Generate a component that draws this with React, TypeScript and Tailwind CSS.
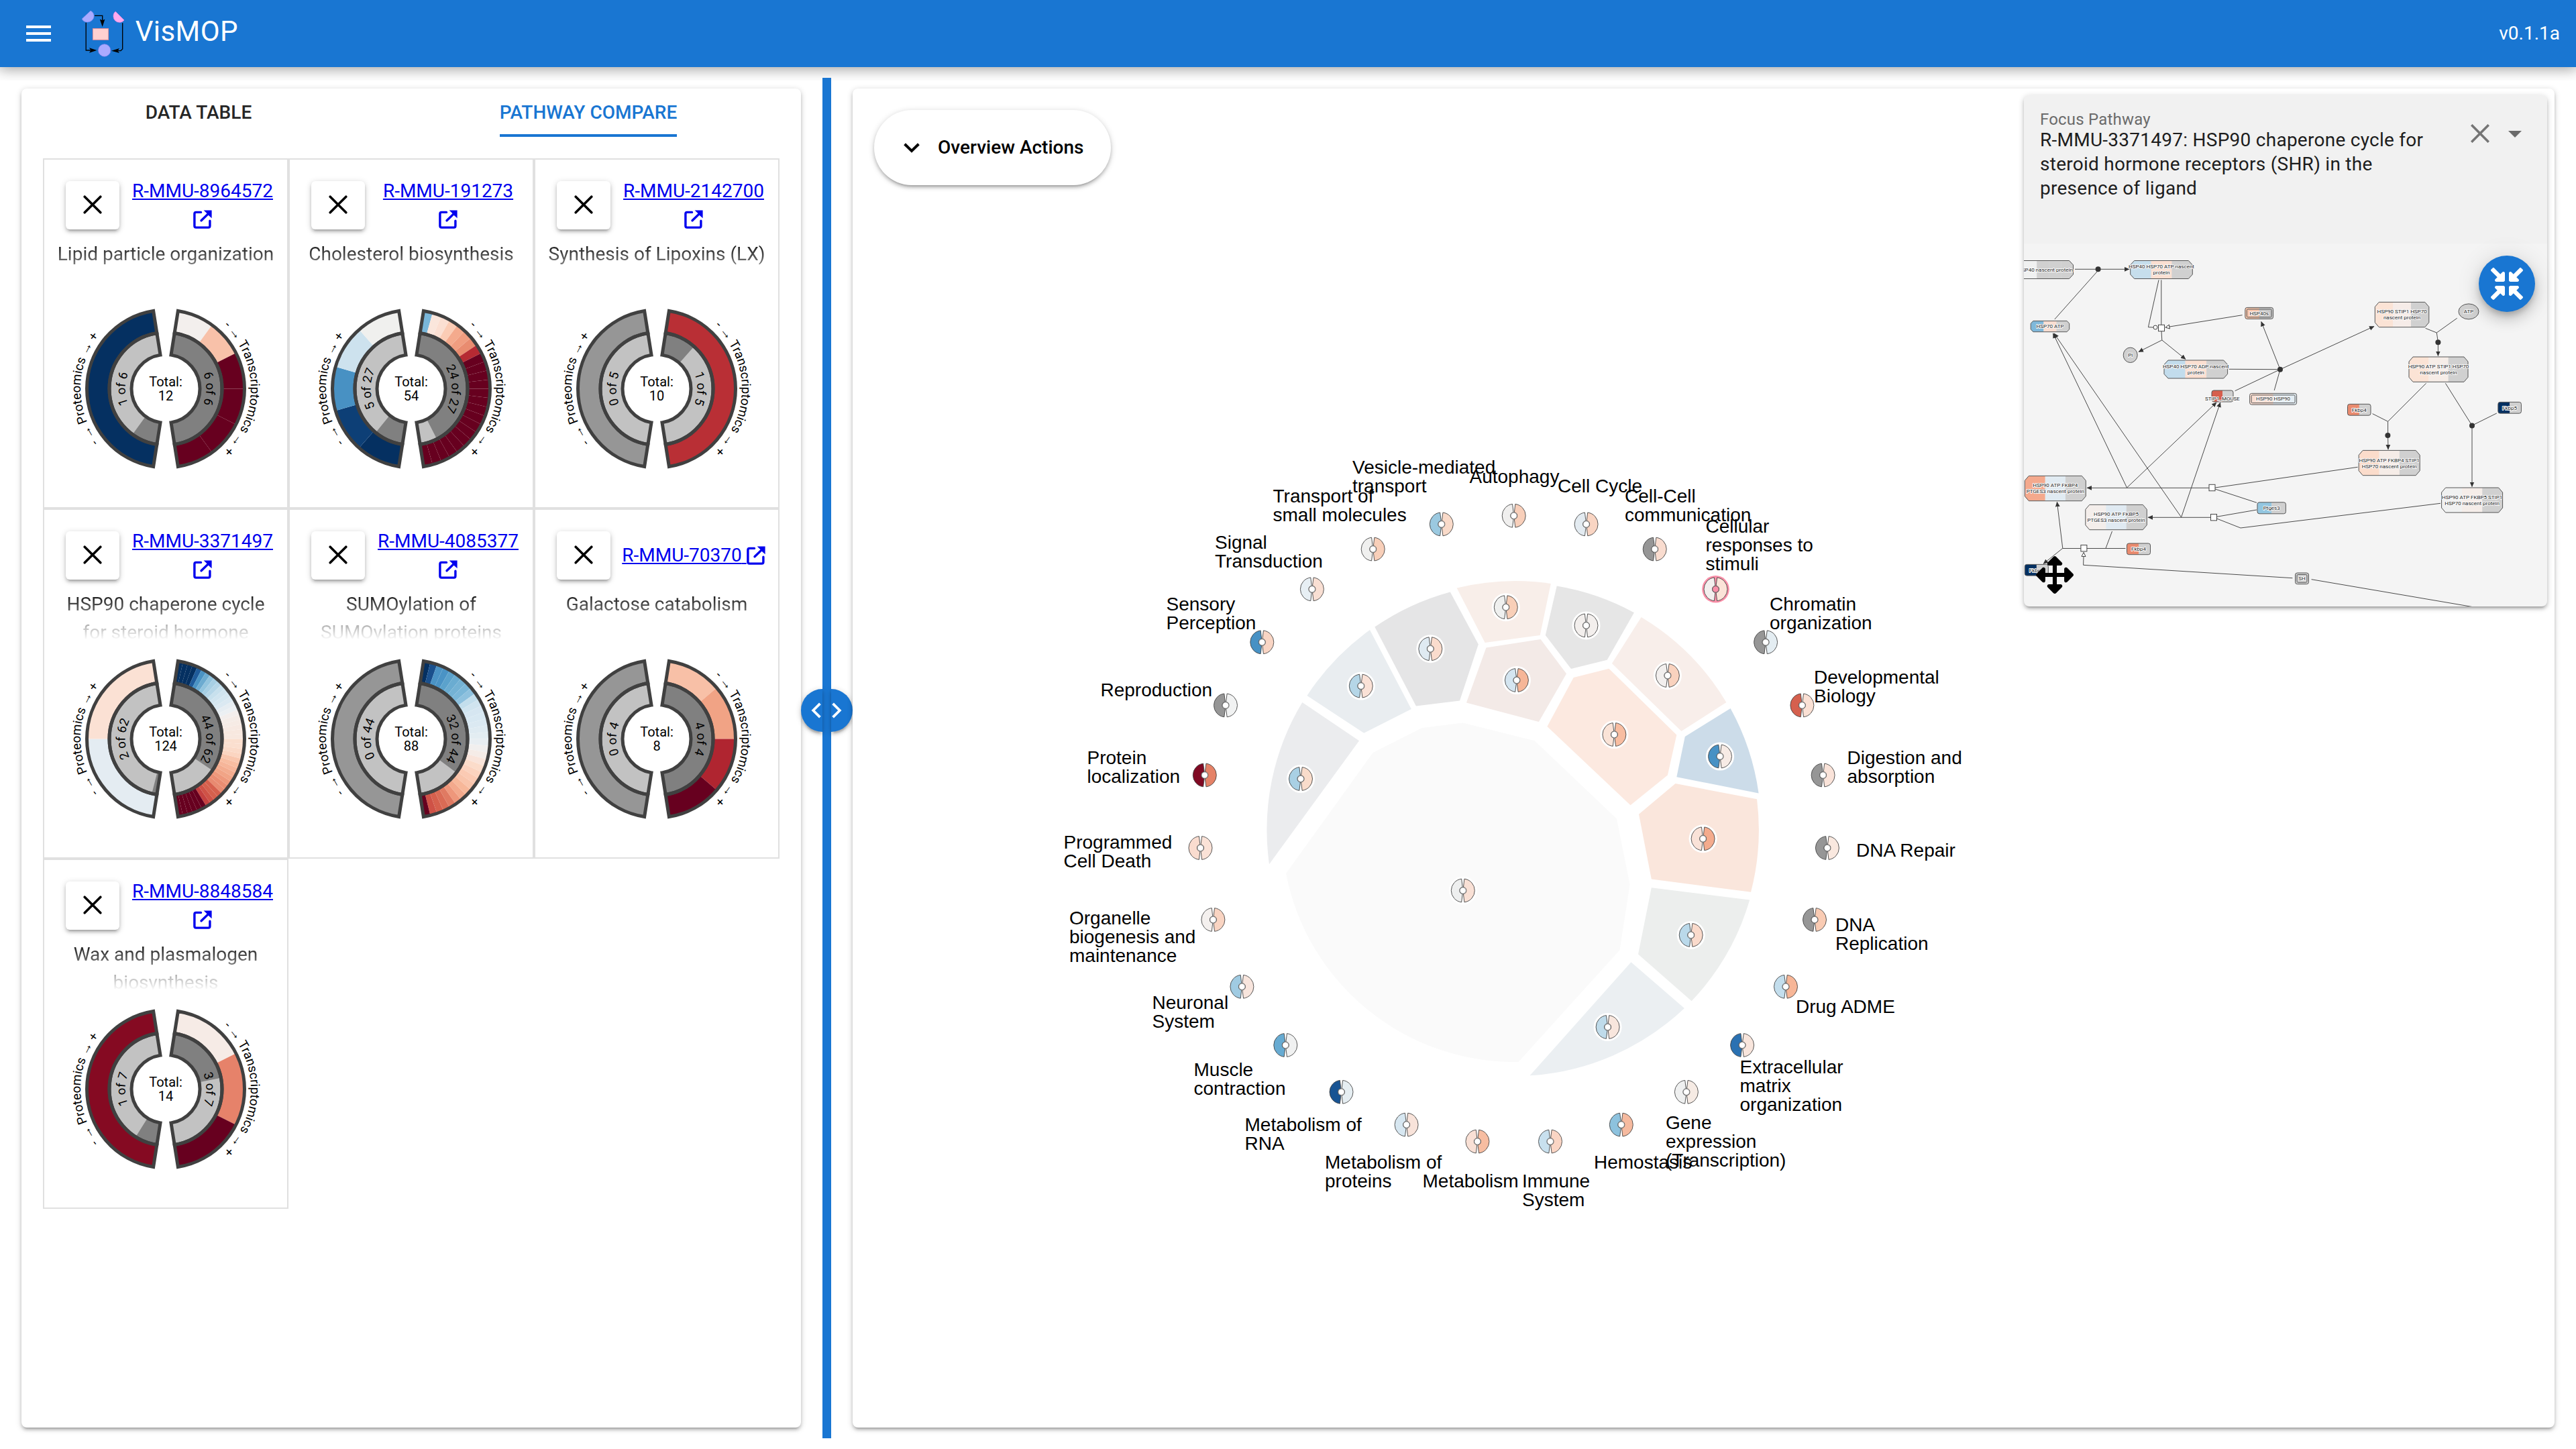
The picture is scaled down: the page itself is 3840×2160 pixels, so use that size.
import React from "react";
import { FaArrowsAlt, FaCompressArrowsAlt } from "react-icons/fa";

/* ---------- geometry helpers ---------- */

const rad = (deg: number) => (deg * Math.PI) / 180;

/* Angles are measured clockwise from twelve o'clock. */
const pt = (r: number, deg: number) =>
  `${(r * Math.sin(rad(deg))).toFixed(3)} ${(-r * Math.cos(rad(deg))).toFixed(3)}`;

const sector = (r0: number, r1: number, a0: number, a1: number) => {
  const big = a1 - a0 > 180 ? 1 : 0;
  return `M${pt(r1, a0)}A${r1} ${r1} 0 ${big} 1 ${pt(r1, a1)}L${pt(r0, a1)}A${r0} ${r0} 0 ${big} 0 ${pt(r0, a0)}Z`;
};

const rep = (color: string, n: number): string[] => Array(n).fill(color);

/* ---------- pathway compare ---------- */

type Omics = { hit: number; colors: string[] };
type Pathway = {
  id: string;
  name: string;
  size: number;
  prot: Omics;
  trans: Omics;
};

const NAVY = "#053061";
const WINE = "#67001f";

const pathways: Pathway[] = [
  {
    id: "R-MMU-8964572",
    name: "Lipid particle organization",
    size: 6,
    prot: { hit: 1, colors: [NAVY] },
    trans: { hit: 6, colors: ["#f3efed", "#f8c1a9", ...rep(WINE, 4)] },
  },
  {
    id: "R-MMU-191273",
    name: "Cholesterol biosynthesis",
    size: 27,
    prot: { hit: 5, colors: [NAVY, "#0d3f76", "#4891c3", "#cde2ee", "#f0f0ee"] },
    trans: {
      hit: 24,
      colors: ["#79b6d9", "#fae6dc", "#fbdfd2", "#fbccb5", "#f4aa8d", "#f09d80", "#e98c70", "#b62a33", ...rep(WINE, 16)],
    },
  },
  {
    id: "R-MMU-2142700",
    name: "Synthesis of Lipoxins (LX)",
    size: 5,
    prot: { hit: 0, colors: [] },
    trans: { hit: 1, colors: ["#b92f35"] },
  },
  {
    id: "R-MMU-3371497",
    name: "HSP90 chaperone cycle for steroid hormone receptors (SHR) in the presence of ligand",
    size: 62,
    prot: { hit: 2, colors: ["#e4ecf2", "#fbe1d4"] },
    trans: {
      hit: 44,
      colors: [
        ...rep(NAVY, 4), "#1f5b9a", "#4a93c4", "#6cabd0", "#92c4de", "#a7cfe4", "#b5d6e8", "#c7e0ed",
        "#d0e4ef", "#d5e7f1", "#dbe9f2", "#e6edf2", "#ecf0f3", "#f3eeec", "#f5ece7", "#f6ebe5", "#f7e9e2",
        "#f8e8df", "#f8e8df", "#fbdfcf", "#fbdfcf", "#fbdac8", "#fbd5c1", "#f9c6ad", "#f8bda1", "#f6b599",
        "#f3ac8f", "#f1a486", "#ee987b", "#ea8d72", "#e88a70", "#d6604d", "#d6604d", "#cf5246", "#c5413f",
        ...rep(WINE, 6),
      ],
    },
  },
  {
    id: "R-MMU-4085377",
    name: "SUMOylation of SUMOylation proteins",
    size: 44,
    prot: { hit: 0, colors: [] },
    trans: {
      hit: 32,
      colors: [
        NAVY, "#1a508d", "#4a93c5", "#4a93c5", "#5ba2cc", "#6aacd1", "#74b2d4", "#7bb7d8", "#8ec1de",
        "#c3deec", "#d0e4ef", "#d6e6f1", "#d8e8f2", "#dbe9f2", "#dfebf2", "#e3edf2", "#e8eef2", "#f1efee",
        "#f5ece7", "#f9e4da", "#fbdcca", "#fbd3bf", "#fbcab3", "#f9c4ab", "#f7b799", "#f3a98c", "#ee977b",
        "#e07a62", "#da6b55", "#d6604d", "#cf5246", WINE,
      ],
    },
  },
  {
    id: "R-MMU-70370",
    name: "Galactose catabolism",
    size: 4,
    prot: { hit: 0, colors: [] },
    trans: { hit: 4, colors: ["#f8c0a7", "#f1a385", "#b02530", WINE] },
  },
  {
    id: "R-MMU-8848584",
    name: "Wax and plasmalogen biosynthesis",
    size: 7,
    prot: { hit: 1, colors: ["#850a22"] },
    trans: { hit: 3, colors: ["#f6ebe6", "#e6826a", WINE] },
  },
];

function Half({ start, omics, size }: { start: number; omics: Omics; size: number }) {
  const span = 162;
  const colors = omics.colors.length ? omics.colors : ["#969696"];
  const step = span / colors.length;
  const split = start + (span * omics.hit) / size;
  const end = start + span;
  return (
    <g>
      {colors.map((c, i) => (
        <path key={i} d={sector(84, 117.5, start + i * step, start + (i + 1) * step)} fill={c} />
      ))}
      <path d={sector(51, 84, start, end)} fill="#c2c2c2" />
      {omics.hit > 0 && <path d={sector(51, 84, start, split)} fill="#808080" />}
      <path d={sector(84, 117.5, start, end)} fill="none" stroke="#404040" strokeWidth={5} />
      <path d={sector(51, 84, start, end)} fill="none" stroke="#404040" strokeWidth={5} />
    </g>
  );
}

function Donut({ p }: { p: Pathway }) {
  const k = p.id;
  return (
    <svg className="block h-[295px] w-[362px] overflow-visible font-['Roboto',sans-serif]" viewBox="-181 -147.5 362 295">
      <defs>
        <path id={`${k}-lo`} d="M0 127A127 127 0 0 1 0 -127" />
        <path id={`${k}-ro`} d="M0 -127A127 127 0 0 1 0 127" />
        <path id={`${k}-li`} d="M0 60.5A60.5 60.5 0 0 1 0 -60.5" />
        <path id={`${k}-ri`} d="M0 -60.5A60.5 60.5 0 0 1 0 60.5" />
      </defs>
      <Half start={189} omics={p.prot} size={p.size} />
      <Half start={9} omics={p.trans} size={p.size} />
      <g fontSize={19} textAnchor="middle" fill="#000">
        <text><textPath href={`#${k}-lo`} startOffset="50%">{"- → Proteomics → +"}</textPath></text>
        <text><textPath href={`#${k}-ro`} startOffset="50%">{"- → Transcriptomics → +"}</textPath></text>
      </g>
      <g fontSize={18.5} textAnchor="middle" fill="#000">
        <text><textPath href={`#${k}-li`} startOffset="50%">{`${p.prot.hit} of ${p.size}`}</textPath></text>
        <text><textPath href={`#${k}-ri`} startOffset="50%">{`${p.trans.hit} of ${p.size}`}</textPath></text>
      </g>
      <g fontSize={20} textAnchor="middle" fill="#000">
        <text y={-3.5}>Total:</text>
        <text y={17.5}>{p.size * 2}</text>
      </g>
    </svg>
  );
}

function ExternalIcon() {
  return (
    <svg viewBox="0 0 28 28" className="inline-block h-7 w-7 align-[-5px]" fill="none" stroke="#0000ee" strokeWidth={3.4}>
      <path d="M11.5 3.4H4.2Q1.9 3.4 1.9 5.7V23.8Q1.9 26.1 4.2 26.1H22.6Q24.9 26.1 24.9 23.8V16.2" strokeLinecap="round" />
      <path d="M12 15.8L23.5 4.6" strokeLinecap="round" />
      <path d="M15.6 0.4H27.6V12.2L23.4 8.4L19.6 4.2Z" fill="#0000ee" stroke="none" />
    </svg>
  );
}

function CompareCell({ p }: { p: Pathway }) {
  return (
    <div className="h-[522px] w-[366px] border-2 border-[#e0e0e0] pt-8">
      <div className="flex h-[72px] items-center pl-8">
        <button className="flex h-[72px] w-20 shrink-0 items-center justify-center rounded-[6px] bg-white pb-[2px] shadow-[0_2px_10px_rgba(0,0,0,0.2),0_4px_4px_rgba(0,0,0,0.14),0_6px_2px_-4px_rgba(0,0,0,0.12)]">
          <svg viewBox="0 0 28 28" className="h-7 w-7" stroke="#000" strokeWidth={3.6} strokeLinecap="round">
            <path d="M2.2 2.2L25.8 25.8M25.8 2.2L2.2 25.8" />
          </svg>
        </button>
        <div className="ml-4 w-[216px] text-center text-[28px] leading-[42px]">
          <a className="text-[#0000ee] underline">
            {p.id} <ExternalIcon />
          </a>
        </div>
      </div>
      <div className="mt-[16px] h-[74px] overflow-hidden px-4 text-center text-[28px] leading-[42px] text-black [mask-image:linear-gradient(to_bottom,black,transparent)]">
        {p.name}
      </div>
      <Donut p={p} />
    </div>
  );
}

/* ---------- overview graph ---------- */

type Term = { left: string; right: string; x: number; y: number; lines: string[]; focus?: boolean };

/* Terms run clockwise around the ring, starting at the top. */
const terms: Term[] = [
  { left: "#f0efee", right: "#f8cfba", x: 2190.5, y: 719.5, lines: ["Autophagy"] },
  { left: "#e3ebf1", right: "#f9d5c3", x: 2322, y: 733.5, lines: ["Cell Cycle"] },
  { left: "#969696", right: "#f9dccf", x: 2422, y: 748.5, lines: ["Cell-Cell", "communication"] },
  { left: "#f3efee", right: "#fbe3d8", x: 2542.5, y: 793.5, lines: ["Cellular", "responses to", "stimuli"], focus: true },
  { left: "#969696", right: "#e4edf2", x: 2638, y: 910, lines: ["Chromatin", "organization"] },
  { left: "#d5604e", right: "#fae0d4", x: 2704, y: 1018.5, lines: ["Developmental", "Biology"] },
  { left: "#969696", right: "#fae3d9", x: 2753.5, y: 1138.5, lines: ["Digestion and", "absorption"] },
  { left: "#969696", right: "#f9e8df", x: 2767, y: 1277, lines: ["DNA Repair"] },
  { left: "#969696", right: "#f9cbb3", x: 2736, y: 1387.5, lines: ["DNA", "Replication"] },
  { left: "#c3deed", right: "#f7b697", x: 2677, y: 1510, lines: ["Drug ADME"] },
  { left: "#2a71b2", right: "#f8e5dc", x: 2593.5, y: 1600, lines: ["Extracellular", "matrix", "organization"] },
  { left: "#eff0f0", right: "#f6ebe4", x: 2483, y: 1682.5, lines: ["Gene", "expression", "(Transcription)"] },
  { left: "#8dc2de", right: "#f6ba9f", x: 2376, y: 1742, lines: ["Hemostasis"] },
  { left: "#c8e0ee", right: "#fad5c4", x: 2269, y: 1770, lines: ["Immune", "System"] },
  { left: "#f9e0d5", right: "#f7bda1", x: 2120.5, y: 1770, lines: ["Metabolism"] },
  { left: "#d7e7f1", right: "#f8e3da", x: 1975, y: 1741.5, lines: ["Metabolism of", "proteins"] },
  { left: "#185493", right: "#e6eef2", x: 1855.5, y: 1685.5, lines: ["Metabolism of", "RNA"] },
  { left: "#67abd2", right: "#f0f1f1", x: 1779.5, y: 1604, lines: ["Muscle", "contraction"] },
  { left: "#a0cbe2", right: "#f8e5dd", x: 1717.5, y: 1503.5, lines: ["Neuronal", "System"] },
  { left: "#f4f0ee", right: "#f9d4c2", x: 1594, y: 1377.5, lines: ["Organelle", "biogenesis and", "maintenance"] },
  { left: "#fadccf", right: "#fae2d7", x: 1585.5, y: 1264.5, lines: ["Programmed", "Cell Death"] },
  { left: "#800923", right: "#e58267", x: 1620.5, y: 1138.5, lines: ["Protein", "localization"] },
  { left: "#969696", right: "#f1f2f2", x: 1640.5, y: 1037.5, lines: ["Reproduction"] },
  { left: "#4791c4", right: "#f9d5c4", x: 1738.5, y: 910, lines: ["Sensory", "Perception"] },
  { left: "#e7eff4", right: "#f9dfd3", x: 1811, y: 817.5, lines: ["Signal", "Transduction"] },
  { left: "#f0f0ef", right: "#f8cfb9", x: 1897.5, y: 748.5, lines: ["Transport of", "small molecules"] },
  { left: "#9bc9e0", right: "#f9dac9", x: 2016, y: 705.5, lines: ["Vesicle-mediated", "transport"] },
];

const R = "A368 368 0 0 1";
const regions: { d: string; fill: string }[] = [
  { fill: "#f8eee9", d: `M2171.6 876.6${R} 2311.8 869.9L2295.7 947L2213.6 957.9Z` },
  { fill: "#e6e6e6", d: `M2320.7 873.5${R} 2435.9 913.2L2395.7 983.8L2342 997L2303.8 947Z` },
  { fill: "#f8eeea", d: `M2446.6 920${R} 2573.4 1047L2506.4 1090L2402.9 989Z` },
  { fill: "#ccdce9", d: `M2579.6 1056${R} 2621.6 1182.4L2499.3 1158.3L2511.8 1098Z` },
  { fill: "#fae6dc", d: `M2497.5 1168L2619 1191.3${R} 2610 1329.8L2461.8 1310.6L2443 1213.7Z` },
  { fill: "#eceeed", d: `M2461.8 1323.3L2608.2 1341.6${R} 2521.6 1492.2L2442 1422.4Z` },
  { fill: "#ebeff2", d: `M2431.4 1434.3L2510.9 1502.9${R} 2280.5 1603.3Z` },
  { fill: "#fce9e0", d: "M2345.7 1010L2398.4 996.7L2499.3 1095.4L2485.9 1155.6L2430.5 1200.3L2306.4 1082.9Z" },
  { fill: "#f3eae7", d: "M2215.4 965.4L2296.6 953L2335 1004.3L2293.9 1076L2185.9 1047.6Z" },
  { fill: "#e5e5e6", d: `M2049.3 934.6${R} 2161.8 882.4L2203.8 960.5L2176 1044.5L2110.9 1052.5Z` },
  { fill: "#e9edf0", d: `M1948.4 1036.9${R} 2042 939L2103.8 1057L2033.2 1092.7Z` },
  { fill: "#ebecee", d: `M1892 1288.2${R} 1941.3 1047L2026 1104.3Z` },
  {
    fill: "#fafafa",
    d: "M2180.5 1077.5L2287.7 1104.3L2410 1220.4L2429.6 1318.6L2414.5 1416.3L2263.6 1582.9A347 347 0 0 1 1917 1302L2046.6 1122L2119.8 1085Z",
  },
];

const clusters: [number, number, string, string][] = [
  [2244.8, 905.2, "#eff0ef", "#f8cfb8"],
  [2364.5, 932.4, "#f3efed", "#f3efed"],
  [2485.9, 1007, "#f2efee", "#f9d2be"],
  [2564, 1127.5, "#4791c4", "#f7ebe5"],
  [2538.6, 1250.3, "#f9e2d8", "#f4ab8d"],
  [2406.4, 1095, "#fae3d7", "#f8bda1"],
  [2260.9, 1014, "#d4e5f0", "#f6b698"],
  [2132.3, 967.2, "#dfeaf2", "#fadccd"],
  [2028.8, 1022.6, "#b5d6e7", "#fae1d6"],
  [1939, 1161, "#a9d0e4", "#f9dccb"],
  [2180.8, 1327.5, "#eeefef", "#f9e0d5"],
  [2520.7, 1393.9, "#bad9ea", "#fadacb"],
  [2396.6, 1531, "#bfdbea", "#f8e6dd"],
];

function Glyph({ x, y, left, right, halo, focus }: { x: number; y: number; left: string; right: string; halo?: boolean; focus?: boolean }) {
  return (
    <g transform={`translate(${x.toFixed(1)} ${y.toFixed(1)})`}>
      {halo && <circle r={21} fill="#fff" />}
      {focus && <circle r={20.3} fill="#f98fa8" />}
      <path d={sector(5, 17.5, 187, 353)} fill={left} stroke="#444" strokeWidth={0.9} />
      <path d={sector(5, 17.5, 7, 173)} fill={right} stroke="#444" strokeWidth={0.9} />
      <circle r={4.6} fill={focus ? "#f98fa8" : "#fff"} stroke="#555" strokeWidth={0.6} />
    </g>
  );
}

function OverviewGraph() {
  return (
    <svg
      className="block h-[1996px] w-[2537px] font-['Liberation_Sans',Arial,sans-serif]"
      viewBox="1271 132 2537 1996"
      fontSize={28}
    >
      {regions.map((r, i) => (
        <path key={i} d={r.d} fill={r.fill} />
      ))}
      {clusters.map(([x, y, l, r], i) => (
        <Glyph key={i} x={x} y={y} left={l} right={r} halo />
      ))}
      {terms.map((t, i) => {
        const a = rad((i * 360) / terms.length);
        return (
          <Glyph key={i} x={2256.7 + 468 * Math.sin(a)} y={1236.8 - 468 * Math.cos(a)} left={t.left} right={t.right} focus={t.focus} />
        );
      })}
      {terms.map((t) => (
        <text key={t.lines.join(" ")} fill="#000">
          {t.lines.map((l, i) => (
            <tspan key={l} x={t.x} y={t.y + i * 28}>
              {l}
            </tspan>
          ))}
        </text>
      ))}
    </svg>
  );
}

/* ---------- focus pathway diagram ---------- */

type Shape = "complex" | "box" | "double";
type PNode = {
  shape: Shape;
  x: number;
  y: number;
  w: number;
  h: number;
  bands: string[];
  lines: string[];
  base: number;
  cx?: number;
};

const G = "#d0d0d0";
const nodes: PNode[] = [
  { shape: "complex", x: 3000, y: 388.5, w: 90.5, h: 27, bands: ["#f0f1f1", "#f0f1f1", G, G, G], lines: ["HSP40 nascent protein"], base: 404.8, cx: 3049 },
  { shape: "complex", x: 3175.7, y: 388.5, w: 92.6, h: 27, bands: ["#c6deec", "#fbdfd1", G], lines: ["HSP40 HSP70 ATP nascent", "protein"], base: 399.8 },
  { shape: "complex", x: 3027.2, y: 478.4, w: 57.5, h: 16.3, bands: ["#7fb8da", "#f8dcd0", G], lines: ["HSP70 ATP"], base: 489.2 },
  { shape: "double", x: 3346.8, y: 458.4, w: 41.8, h: 17, bands: ["#f8c6ac", "#c8c8c8"], lines: ["HSP40s"], base: 469.8 },
  { shape: "complex", x: 3540.3, y: 450.4, w: 80.5, h: 37.3, bands: ["#fbe3d5", "#f6ece8", G], lines: ["HSP90 STIP1 HSP70", "nascent protein"], base: 467 },
  { shape: "complex", x: 3591, y: 532, w: 88, h: 37.3, bands: ["#fbe3d5", "#f6ede8", G], lines: ["HSP90 ATP STIP1 HSP70", "nascent protein"], base: 549.2 },
  { shape: "complex", x: 3226, y: 537, w: 94.6, h: 27, bands: ["#c2dcec", "#fbdfd1", G], lines: ["HSP40 HSP70 ADP nascent", "protein"], base: 549.2 },
  { shape: "box", x: 3297, y: 582, w: 32, h: 17, bands: ["#d65f4d", G], lines: ["STIP1_MOUSE"], base: 597 },
  { shape: "double", x: 3353.6, y: 586.4, w: 70, h: 16.8, bands: ["#f9ded2", "#e3edf3"], lines: ["HSP90 HSP90"], base: 597 },
  { shape: "box", x: 3499.5, y: 602.4, w: 34.5, h: 16.8, bands: ["#e98b6f", G], lines: ["Fkbp4"], base: 614 },
  { shape: "box", x: 3723.8, y: 599.4, w: 34.6, h: 16.8, bands: [NAVY, G], lines: ["Fkbp5"], base: 611.2 },
  { shape: "complex", x: 3516.2, y: 671.4, w: 91, h: 37.3, bands: ["#fbdccb", "#f5ece7", G], lines: ["HSP90 ATP FKBP4 STIP1", "HSP70 nascent protein"], base: 688.7 },
  { shape: "complex", x: 3639.6, y: 727, w: 91, h: 37, bands: ["#f0f1f1", "#f5ede9", G], lines: ["HSP90 ATP FKBP5 STIP1", "HSP70 nascent protein"], base: 744 },
  { shape: "complex", x: 3018.3, y: 709.4, w: 91, h: 37.3, bands: ["#f4a98d", "#e1ebf2", G], lines: ["HSP90 ATP FKBP4", "PTGES3 nascent protein"], base: 725.8 },
  { shape: "complex", x: 3108.8, y: 752.4, w: 91.5, h: 37.3, bands: ["#f4eeeb", "#e0eaf2", G], lines: ["HSP90 ATP FKBP5", "PTGES3 nascent protein"], base: 768.8 },
  { shape: "box", x: 3365, y: 748.8, w: 42.4, h: 17, bands: ["#93c6e0", G], lines: ["Ptges3"], base: 760 },
  { shape: "box", x: 3170.5, y: 810, w: 35, h: 16.7, bands: ["#e98b6f", G], lines: ["Fkbp4"], base: 821.4 },
  { shape: "box", x: 3018.3, y: 841.4, w: 35, h: 16.7, bands: [NAVY, G], lines: ["Fkbp5"], base: 853 },
  { shape: "double", x: 3421.5, y: 854, w: 20, h: 16.7, bands: [G], lines: ["SH"], base: 865 },
];

const plainEdges = [
  "M3062.8 476L3126 405",
  "M3221.8 417.3V484.3M3218 417.3L3202.4 487.7L3210 488",
  "M3222 493.7L3222.8 507",
  "M3322.7 550.3L3399 550.7M3331.6 582.7L3399 550.7L3390.2 582",
  "M3615.6 489.3L3632.3 496L3662.7 474.3M3632.3 496L3634.4 510",
  "M3616.6 571.3L3559.6 628.3L3536.6 616.7M3559.6 628.3V649",
  "M3645.4 571.3L3685 634.3L3721.8 616",
  "M3302 727L3514.6 696.3M3302 729L3364 749.3",
  "M3304.4 770.3L3364 760M3304.4 773L3340 787L3638 750.3",
  "M3148.5 792L3139 817.3M3168.4 817.5H3074.8",
  "M3445.6 863.7L3685 904.5",
];
const arrowEdges = [
  "M3093 401.3H3174",
  "M3222.8 507L3188 524.5",
  "M3222.8 507L3258 535.5",
  "M3399 550.7L3370.8 479.5",
  "M3399 550.7L3539 486.5",
  "M3634.4 510V530.5",
  "M3170.5 727L3304 600",
  "M3251.6 771L3309.8 600",
  "M3170.5 727L3060.5 497",
  "M3251.6 771L3062 497",
  "M3559.6 649L3560 670",
  "M3685 634V725.5",
  "M3294 727.3H3111",
  "M3296 771.3H3202",
  "M3074.8 817.3L3066.4 748.3",
  "M3074.8 817.3L3046 840.5",
];
const openEdges = ["M3342.6 469.7L3228 488", "M3417.4 861.7L3105.6 842.3L3106.2 823.5"];
const junctions: [number, number][] = [
  [3127.6, 401.3], [3399, 550.7], [3634.4, 510.3], [3559.4, 649], [3685, 634.4],
];
const processes: [number, number][] = [
  [3222, 489], [3297.5, 727], [3300, 771.2], [3106.4, 817.2],
];

function outline(n: PNode) {
  if (n.shape === "complex") {
    const { x, y, w, h } = n;
    const c = Math.min(6, h * 0.22);
    const v = Math.min(7, h * 0.24);
    return <path d={`M${x + c} ${y}H${x + w - c}L${x + w} ${y + v}V${y + h - v}L${x + w - c} ${y + h}H${x + c}L${x} ${y + h - v}V${y + v}Z`} />;
  }
  return <rect x={n.x} y={n.y} width={n.w} height={n.h} rx={3} />;
}

function NodeView({ n, i }: { n: PNode; i: number }) {
  const bw = n.w / n.bands.length;
  const cx = n.cx ?? n.x + n.w / 2;
  return (
    <g>
      <clipPath id={`node-${i}`}>{outline(n)}</clipPath>
      <g clipPath={`url(#node-${i})`}>
        {n.bands.map((b, k) => (
          <rect key={k} x={n.x + k * bw} y={n.y} width={bw + 0.3} height={n.h} fill={b} />
        ))}
      </g>
      <g fill="none" stroke="#555" strokeWidth={1}>
        {outline(n)}
        {n.shape === "double" && <rect x={n.x + 2.5} y={n.y + 2.5} width={n.w - 5} height={n.h - 5} rx={1.5} />}
      </g>
      <NodeText lines={n.lines} x={cx} y={n.base} />
    </g>
  );
}

function NodeText({ lines, x, y }: { lines: string[]; x: number; y: number }) {
  return (
    <g fill="#222" stroke="#fff" strokeWidth={1.8} strokeLinejoin="round" paintOrder="stroke" textAnchor="middle" fontSize={8}>
      {lines.map((l, k) => (
        <text key={l} x={x} y={y + k * 9}>
          {l}
        </text>
      ))}
    </g>
  );
}

function PathwayDiagram() {
  return (
    <svg className="block h-[541px] w-[780px] font-['Roboto',sans-serif]" viewBox="3017 363 780 541">
      <defs>
        <marker id="solid" viewBox="0 0 8 8" refX="7" refY="4" markerWidth="8" markerHeight="8" markerUnits="userSpaceOnUse" orient="auto">
          <path d="M0 0.6L7.5 4L0 7.4Z" fill="#333" />
        </marker>
        <marker id="open" viewBox="0 0 8 8" refX="7" refY="4" markerWidth="8" markerHeight="8" markerUnits="userSpaceOnUse" orient="auto">
          <path d="M1 1L7 4L1 7Z" fill="#fff" stroke="#333" strokeWidth="0.9" />
        </marker>
      </defs>
      <g fill="none" stroke="#4a4a4a" strokeWidth={1}>
        {plainEdges.map((d) => (
          <path key={d} d={d} />
        ))}
        {arrowEdges.map((d) => (
          <path key={d} d={d} markerEnd="url(#solid)" />
        ))}
        {openEdges.map((d) => (
          <path key={d} d={d} markerEnd="url(#open)" />
        ))}
      </g>
      {junctions.map(([x, y]) => (
        <circle key={x} cx={x} cy={y} r={4} fill="#333" />
      ))}
      <g fill="#fff" stroke="#444" strokeWidth={1}>
        {processes.map(([x, y]) => (
          <rect key={x} x={x - 4.5} y={y - 4.7} width={9} height={9.4} />
        ))}
        <circle cx={3213} cy={488} r={3} />
      </g>
      <g fill={G} stroke="#555" strokeWidth={1}>
        <ellipse cx={3175.7} cy={529.3} rx={10.5} ry={11.2} />
        <ellipse cx={3680} cy={464.4} rx={15} ry={11.5} />
      </g>
      <NodeText lines={["Pi"]} x={3175.7} y={532} />
      <NodeText lines={["ATP"]} x={3680} y={467.3} />
      {nodes.map((n, i) => (
        <NodeView key={i} n={n} i={i} />
      ))}
    </svg>
  );
}

function FocusPanel() {
  return (
    <section className="absolute left-[1746px] top-[10px] h-[762px] w-[780px] overflow-visible rounded-[8px] bg-[#f4f4f4] shadow-[0_2px_10px_rgba(0,0,0,0.2),0_4px_4px_rgba(0,0,0,0.14),0_6px_2px_-4px_rgba(0,0,0,0.12)]">
      <div className="flex h-[221px] rounded-t-[8px] bg-[#f1f1f1] pl-6 pr-[38px] pt-[21px]">
        <div className="w-[600px]">
          <div className="h-[28px] text-[24px] leading-[30px] tracking-[0.2px] text-[#6b6b6b]">Focus Pathway</div>
          <div className="text-[28px] leading-[36px] tracking-[0.26px] text-[#1d1d1d]">
            R-MMU-3371497: HSP90 chaperone cycle for steroid hormone receptors (SHR) in the presence of ligand
          </div>
        </div>
        <div className="ml-auto flex h-[72px] items-center gap-[28px]">
          <svg viewBox="0 0 28 28" className="h-7 w-7" stroke="#757575" strokeWidth={3.6}>
            <path d="M1.2 1.2L26.8 26.8M26.8 1.2L1.2 26.8" />
          </svg>
          <svg viewBox="0 0 20 10" className="mt-[2px] h-[10px] w-5" fill="#6b6b6b">
            <path d="M0 0H20L10 10Z" />
          </svg>
        </div>
      </div>
      <PathwayDiagram />
      <button className="absolute left-[678px] top-[239px] flex size-[84px] items-center justify-center rounded-full bg-[#1976d2] text-white shadow-[0_6px_10px_-2px_rgba(0,0,0,0.2),0_12px_20px_rgba(0,0,0,0.14),0_2px_36px_rgba(0,0,0,0.12)]">
        <FaCompressArrowsAlt size={48} />
      </button>
      <FaArrowsAlt size={56} className="absolute left-[18px] top-[687px] text-black" />
    </section>
  );
}

/* ---------- chrome ---------- */

function Logo() {
  return (
    <svg viewBox="300 40 200 220" className="h-[73.3px] w-[66.7px]">
      <path d="M307 85L345 49.5C354 53 360 62 360 73A29 27 0 0 1 331 100C320 100 310 95 307 85Z" fill="#aaaaff" stroke="#8f8ff5" strokeWidth={2} />
      <path d="M457 53L495 91C490 98 482 101 474 101A27 27 0 0 1 447 74C447 65 450 57 457 53Z" fill="#ffaaee" stroke="#f58ce0" strokeWidth={2} />
      <rect x={355} y={129} width={70} height={50} fill="#ffd0d0" stroke="#f08a90" strokeWidth={2.5} />
      <circle cx={407} cy={226} r={27.5} fill="#aaaaff" stroke="#8a80f0" strokeWidth={2} />
      <g fill="none" stroke="#000" strokeWidth={4}>
        <path d="M363 71H398V92" />
        <path d="M324.5 102V226H345" />
        <path d="M488 104V220L480 228H468" />
      </g>
      <path d="M386.5 87L398 92L409 87L398 121Z" />
      <path d="M339 215L346 226L339 237L373 226Z" />
      <path d="M474 217L467 228L474 238L438 228Z" />
    </svg>
  );
}

function TopBar() {
  return (
    <header className="relative h-[100px] shrink-0 [clip-path:inset(0_0_-20px_0)]">
      <div className="flex h-[100px] items-center bg-[#1976d2] pl-[39px] pr-6 text-white shadow-[0_0_20px_4px_rgba(0,0,0,0.2),0_0_20px_rgba(0,0,0,0.24)]">
        <div className="flex w-[37px] flex-col gap-[6px]">
          <span className="h-1 bg-white" />
          <span className="h-1 bg-white" />
          <span className="h-1 bg-white" />
        </div>
        <div className="ml-11">
          <Logo />
        </div>
        <div className="ml-[15px] pb-[7px] text-[42px] leading-[50px] tracking-[0.42px]">VisMOP</div>
        <div className="ml-auto text-[28px] leading-[42px]">v0.1.1a</div>
      </div>
    </header>
  );
}

const cardShadow =
  "rounded-[8px] bg-white shadow-[0_2px_10px_rgba(0,0,0,0.2),0_4px_4px_rgba(0,0,0,0.14),0_6px_2px_-4px_rgba(0,0,0,0.12)]";

function Splitter() {
  return (
    <div className="relative -my-4 flex w-[77px] shrink-0 justify-center">
      <div className="absolute left-0 top-[911px] flex h-16 w-8 items-center justify-end rounded-l-full bg-[#1976d2] shadow-[0_2px_10px_rgba(0,0,0,0.2),0_4px_4px_rgba(0,0,0,0.14),0_6px_2px_-4px_rgba(0,0,0,0.12)]">
        <svg viewBox="0 0 16 24" className="mr-[1px] h-6 w-4" fill="none" stroke="#fff" strokeWidth={3.8}>
          <path d="M13.4 1.8L3.2 12L13.4 22.2" />
        </svg>
      </div>
      <div className="w-[13px] bg-[#1976d2]" />
      <div className="absolute right-0 top-[911px] flex h-16 w-8 items-center rounded-r-full bg-[#1976d2] shadow-[0_2px_10px_rgba(0,0,0,0.2),0_4px_4px_rgba(0,0,0,0.14),0_6px_2px_-4px_rgba(0,0,0,0.12)]">
        <svg viewBox="0 0 16 24" className="h-6 w-4" fill="none" stroke="#fff" strokeWidth={3.8}>
          <path d="M2.6 1.8L12.8 12L2.6 22.2" />
        </svg>
      </div>
    </div>
  );
}

export default function App() {
  return (
    <div className="flex h-[2160px] w-[3840px] flex-col overflow-hidden bg-white font-['Roboto',sans-serif] text-black">
      <TopBar />
      <main className="flex h-[2060px] p-8">
        <section className={`w-[1162px] shrink-0 ${cardShadow}`}>
          <nav className="flex h-[72px] text-[28px] font-medium leading-[72px]">
            <div className="flex flex-auto justify-center text-[#262626]">
              <span>DATA TABLE</span>
            </div>
            <div className="flex flex-auto justify-center text-[#1976d2]">
              <span className="border-b-4 border-[#1976d2]">PATHWAY COMPARE</span>
            </div>
          </nav>
          <div className="grid grid-cols-[repeat(3,366px)] px-8 pt-8">
            {pathways.map((p) => (
              <CompareCell key={p.id} p={p} />
            ))}
          </div>
        </section>
        <Splitter />
        <section className={`relative w-[2537px] shrink-0 ${cardShadow}`}>
          <OverviewGraph />
          <button className="absolute left-8 top-8 flex h-28 w-[353px] items-center rounded-full bg-white pl-[44px] text-[28px] font-medium shadow-[0_2px_10px_rgba(0,0,0,0.2),0_4px_4px_rgba(0,0,0,0.14),0_6px_2px_-4px_rgba(0,0,0,0.12)]">
            <svg viewBox="0 0 24 15" className="h-[15px] w-6" fill="none" stroke="#000" strokeWidth={4}>
              <path d="M1.6 1.8L12 12L22.4 1.8" />
            </svg>
            <span className="ml-[27px]">Overview Actions</span>
          </button>
          <FocusPanel />
        </section>
      </main>
    </div>
  );
}
